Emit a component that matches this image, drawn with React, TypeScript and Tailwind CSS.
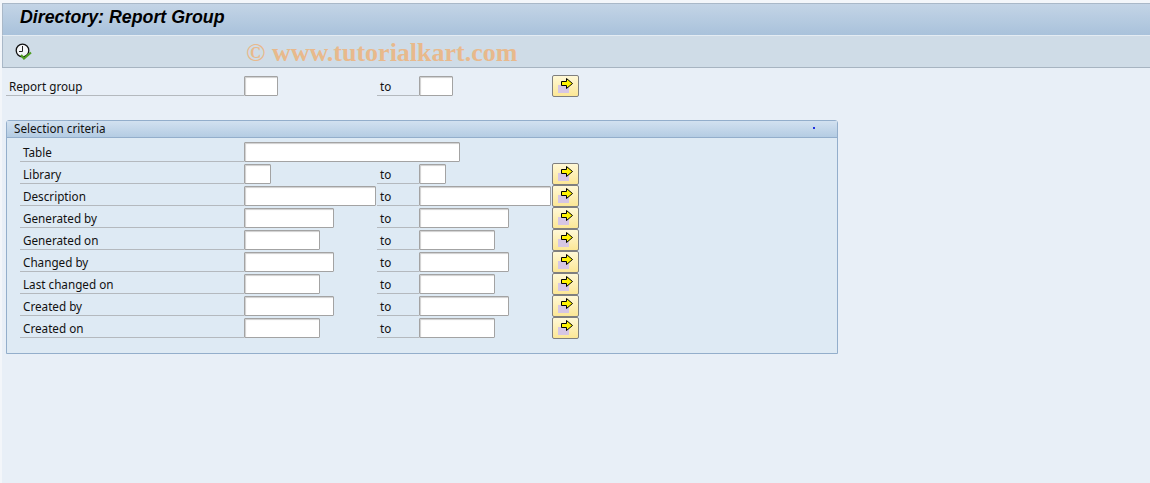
const rows = [
  { label: "Table", w: 216 },
  { label: "Library", w: 27, to: true },
  { label: "Description", w: 132, to: true },
  { label: "Generated by", w: 90, to: true },
  { label: "Generated on", w: 76, to: true },
  { label: "Changed by", w: 90, to: true },
  { label: "Last changed on", w: 76, to: true },
  { label: "Created by", w: 90, to: true },
  { label: "Created on", w: 76, to: true },
]

function ClockCheck() {
  return (
    <svg width="18" height="18" viewBox="0 0 18 18" fill="none">
      <circle cx="7.5" cy="7.5" r="6.3" fill="#f4f6f8" stroke="#111" strokeWidth="1.3" />
      <path d="M7.5 3V8.5M4 8.5H7.5" stroke="#222" strokeWidth="1" />
      <path d="M6 12L9 15.5L16 9.5" stroke="#4f9e22" strokeWidth="2.2" />
    </svg>
  )
}

function ArrowButton() {
  return (
    <button className="flex w-[27px] h-[22px] -mt-px rounded-[2px] border border-[#7f7f7f] bg-gradient-to-b from-[#fff8d6] to-[#fce795] shrink-0">
      <svg width="25" height="20" viewBox="0 0 25 20" className="block">
        <rect x="5" y="9" width="11" height="8" fill="#d6c6e4" />
        <path d="M8.5 5.5H13.5V2.5L19.5 7.5L13.5 12.5V9.5H8.5Z" fill="#fff200" stroke="#000" strokeWidth="1" />
      </svg>
    </button>
  )
}

function Field({ w }: { w: number }) {
  return (
    <div
      className="h-[20px] bg-white border border-[#a3a3a3] rounded-[1px] shadow-[inset_1px_1px_1px_#cfcfcf] shrink-0"
      style={{ width: w }}
    />
  )
}

function ToLabel() {
  return (
    <div className="w-[42px] h-[20px] border-b border-[#b4b9be] pl-[3px] leading-[21px] text-[#111]">to</div>
  )
}

export default function App() {
  return (
    <div className="w-[1150px] h-[483px] overflow-hidden bg-[#f3f6fa] pt-[3px] pl-[2px] pb-px font-['Noto_Sans',sans-serif] text-[11.7px] text-[#111]">
      <div className="h-[32px] pl-[17px] border-t border-l border-[#a9b8c8] bg-gradient-to-b from-[#c3d4e6] to-[#a9c2db] font-['Liberation_Sans',sans-serif] text-[17.8px] font-bold italic leading-[27px] text-black">
        Directory: Report Group
      </div>
      <div className="h-[33px] flex items-center pl-[12px] border-t border-l border-b border-t-[#e4ecf3] border-l-[#a9b8c8] border-b-[#a7b4c1] bg-[#cfdce7]">
        <ClockCheck />
        <span className="ml-[213px] mt-[2px] font-['Liberation_Serif',serif] text-[26px] font-bold text-[#e8b98c] leading-none">
          © www.tutorialkart.com
        </span>
      </div>
      <div className="h-[415px] bg-[#e8eff7] pt-[8px] pl-[4px]">
        <div className="flex h-[21px]">
          <div className="w-[238px] h-[20px] border-b border-[#b4b9be] pl-[3px] leading-[21px]">Report group</div>
          <div className="w-[133px]"><Field w={34} /></div>
          <ToLabel />
          <div className="w-[133px]"><Field w={34} /></div>
          <ArrowButton />
        </div>
        <div className="mt-[23px] w-[832px] h-[234px] border border-[#93aecb] rounded-t-[3px] bg-[#deeaf4]">
          <div className="h-[17px] flex items-center justify-between pl-[7px] pr-[22px] pb-[2px] border-b border-[#93aecb] bg-gradient-to-b from-[#d2e1f0] to-[#b4cce3] leading-[16px]">
            <span>Selection criteria</span>
            <span className="w-[2px] h-[2px] bg-[#2030e0]" />
          </div>
          <div className="pt-[4px] pl-[13px]">
            {rows.map((row) => (
              <div key={row.label} className="flex h-[22px]">
                <div className="w-[224px] h-[20px] border-b border-[#b4b9be] pl-[3px] leading-[21px]">{row.label}</div>
                <div className="w-[133px]"><Field w={row.w} /></div>
                {row.to && (
                  <>
                    <ToLabel />
                    <div className="w-[133px]"><Field w={row.w} /></div>
                    <ArrowButton />
                  </>
                )}
              </div>
            ))}
          </div>
        </div>
      </div>
    </div>
  )
}
